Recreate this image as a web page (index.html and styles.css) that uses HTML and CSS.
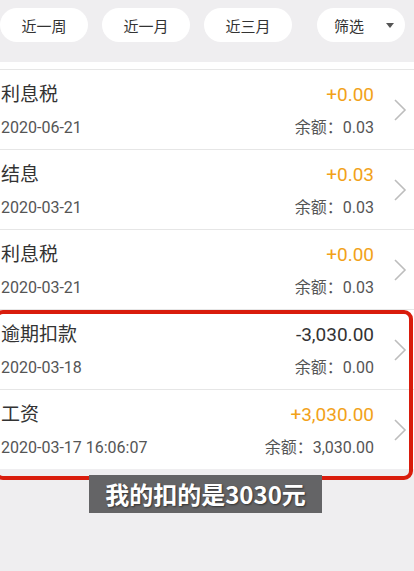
FILE: index.html
```html
<!DOCTYPE html>
<html lang="zh-CN">

<head>
    <meta charset="UTF-8">
    <meta name="viewport" content="width=device-width, initial-scale=1.0">
    <title>交易明细</title>
    <link rel="stylesheet" href="styles.css">
</head>

<body>
    <header class="filters">
        <button class="pill">近一周</button>
        <button class="pill">近一月</button>
        <button class="pill">近三月</button>
        <button class="pill pill-select">筛选 <span class="caret"></span></button>
    </header>

    <main class="records">
        <div class="row">
            <div class="row-main">
                <div class="line">
                    <span class="title">利息税</span>
                    <span class="amount plus">+0.00</span>
                </div>
                <div class="line">
                    <span class="date">2020-06-21</span>
                    <span class="balance">余额：0.03</span>
                </div>
            </div>
            <svg class="chevron" width="14" height="24" viewBox="0 0 14 24"><polyline points="2,2 12,12 2,22" /></svg>
        </div>

        <div class="row">
            <div class="row-main">
                <div class="line">
                    <span class="title">结息</span>
                    <span class="amount plus">+0.03</span>
                </div>
                <div class="line">
                    <span class="date">2020-03-21</span>
                    <span class="balance">余额：0.03</span>
                </div>
            </div>
            <svg class="chevron" width="14" height="24" viewBox="0 0 14 24"><polyline points="2,2 12,12 2,22" /></svg>
        </div>

        <div class="row">
            <div class="row-main">
                <div class="line">
                    <span class="title">利息税</span>
                    <span class="amount plus">+0.00</span>
                </div>
                <div class="line">
                    <span class="date">2020-03-21</span>
                    <span class="balance">余额：0.03</span>
                </div>
            </div>
            <svg class="chevron" width="14" height="24" viewBox="0 0 14 24"><polyline points="2,2 12,12 2,22" /></svg>
        </div>

        <div class="row">
            <div class="row-main">
                <div class="line">
                    <span class="title">逾期扣款</span>
                    <span class="amount">-3,030.00</span>
                </div>
                <div class="line">
                    <span class="date">2020-03-18</span>
                    <span class="balance">余额：0.00</span>
                </div>
            </div>
            <svg class="chevron" width="14" height="24" viewBox="0 0 14 24"><polyline points="2,2 12,12 2,22" /></svg>
        </div>

        <div class="row">
            <div class="row-main">
                <div class="line">
                    <span class="title">工资</span>
                    <span class="amount plus">+3,030.00</span>
                </div>
                <div class="line">
                    <span class="date">2020-03-17 16:06:07</span>
                    <span class="balance">余额：3,030.00</span>
                </div>
            </div>
            <svg class="chevron" width="14" height="24" viewBox="0 0 14 24"><polyline points="2,2 12,12 2,22" /></svg>
        </div>

        <!-- annotation drawn over the last two rows -->
        <div class="highlight"></div>
    </main>

    <div class="caption">我的扣的是3030元</div>
</body>

</html>
```

FILE: styles.css
```css
body {
    margin: 0;
    min-height: 100vh;
    background-color: #efeef0;
    font-family: Roboto, "Noto Sans CJK SC", sans-serif;
    color: #333;
    position: relative;
}

.filters {
    display: flex;
    align-items: center;
    gap: 14px;
    height: 62px;
    padding: 0 9px 0 0;
    box-sizing: border-box;
}

.pill {
    width: 88px;
    height: 34px;
    border: none;
    border-radius: 17px;
    background-color: #fff;
    font-family: inherit;
    font-size: 15px;
    color: #333;
    padding: 0;
    margin-top: -12px;
}

.pill-select {
    margin-left: auto;
    display: flex;
    align-items: center;
    justify-content: center;
    gap: 22px;
    padding-left: 6px;
}

.caret {
    width: 0;
    height: 0;
    border-left: 4px solid transparent;
    border-right: 4px solid transparent;
    border-top: 5px solid #555;
}

.records {
    position: relative;
    background-color: #fff;
    padding-top: 7px;
}

.row {
    display: flex;
    align-items: center;
    height: 79px;
    border-top: 1px solid #e6e6e6;
    padding-left: 1px;
}

.row-main {
    flex: 1;
    display: flex;
    flex-direction: column;
    gap: 8px;
    padding-right: 19px;
    margin-top: -2px;
}

.line {
    display: flex;
    justify-content: space-between;
    align-items: baseline;
}

.title {
    font-size: 19px;
    color: #333;
}

.amount {
    font-size: 19px;
    color: #333;
}

.amount.plus {
    color: #f2a219;
}

.date,
.balance {
    font-size: 16px;
    color: #555;
}

.chevron {
    margin-right: 7px;
    fill: none;
    stroke: #bdbdbd;
    stroke-width: 1.6;
}

.highlight {
    position: absolute;
    left: -6px;
    right: 1px;
    top: 248px;
    height: 170px;
    border: 4px solid #d91c0c;
    border-radius: 9px;
    box-sizing: border-box;
}

.caption {
    position: absolute;
    left: 89px;
    top: 475px;
    width: 233px;
    height: 38px;
    background-color: #646466;
    color: #fff;
    font-family: "Noto Sans CJK SC", sans-serif;
    font-weight: bold;
    font-size: 24px;
    line-height: 38px;
    text-align: center;
    text-shadow: 1px 1px 2px rgba(0, 0, 0, 0.5);
}
```
